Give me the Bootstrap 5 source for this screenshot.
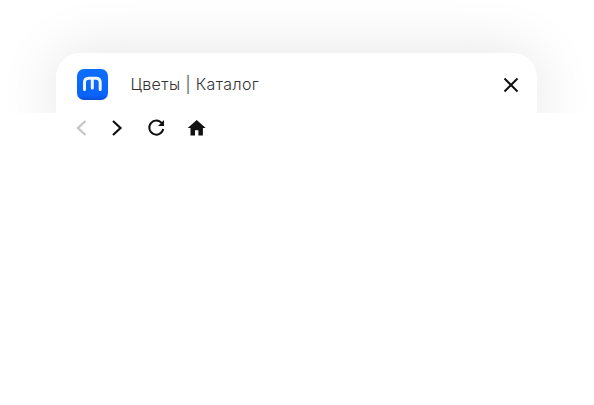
<!DOCTYPE html>
<html lang="ru">
<head>
    <meta charset="UTF-8">
    <meta name="viewport" content="width=device-width, initial-scale=1.0">
    <title>Цветы | Каталог</title>
    <link href="https://cdn.jsdelivr.net/npm/bootstrap@5.3.0/dist/css/bootstrap.min.css" rel="stylesheet">
    <style>
        body { background-color: #fff; overflow: hidden; }
        .head-clip { height: 113px; padding: 53px 57px 0 56px; overflow: hidden; }
        .head-box { height: 80px; padding: 16px 18px 0 21px; background: #fff; border-radius: 24px 24px 0 0; box-shadow: 0 0 60px rgba(0, 0, 0, 0.11); }
        .app-logo { width: 31px; height: 31px; flex: none; }
        .page-title { margin: 0 0 0 22.5px; font: 300 16px/31px Inter, "Liberation Sans", sans-serif; letter-spacing: 0.4px; color: #333; }
        .close-x { margin-left: auto; padding: 0; border: 0; background: none; line-height: 0; }
        .tool-row { padding: 5px 0 0 72px; gap: 16px; }
        .tool-btn { height: 20px; padding: 0; border: 0; background: none; line-height: 0; }
        .tool-back { width: 18px; }
        .tool-next { width: 22px; }
        .tool-wide { width: 24px; }
    </style>
</head>
<body>

<div class="head-clip">
    <div class="head-box d-flex align-items-start">
        <svg class="app-logo" viewBox="0 0 31 31">
            <defs>
                <linearGradient id="logoBg" x1="0" y1="0" x2="0" y2="1">
                    <stop offset="0" stop-color="#0d6efd"/>
                    <stop offset="0.85" stop-color="#0a64fb"/>
                    <stop offset="1" stop-color="#0a4fd6"/>
                </linearGradient>
            </defs>
            <rect width="31" height="31" rx="7" fill="url(#logoBg)"/>
            <path d="M7.5 20.5V13.5Q7.5 9.2 11.5 9.2H19Q23.2 9.2 23.2 13.5V20.5M15.3 10V19" fill="none" stroke="#f2f6ff" stroke-width="3" stroke-linecap="round"/>
        </svg>
        <h1 class="page-title">Цветы | Каталог</h1>
        <button class="close-x mt-2" type="button" aria-label="Закрыть">
            <svg width="16" height="16" viewBox="0 0 16 16"><path d="M1.5 1.5L14.5 14.5M14.5 1.5L1.5 14.5" stroke="#111" stroke-width="2" fill="none"/></svg>
        </button>
    </div>
</div>

<div class="tool-row d-flex align-items-center">
    <button class="tool-btn tool-back" type="button" aria-label="Назад">
        <svg width="14" height="20" viewBox="0 0 14 20"><path d="M11.5 3L4 10L11.5 17" stroke="#c4c4c4" stroke-width="2.2" fill="none"/></svg>
    </button>
    <button class="tool-btn tool-next" type="button" aria-label="Вперёд">
        <svg width="14" height="20" viewBox="0 0 14 20"><path d="M3 3L10.5 10L3 17" stroke="#111" stroke-width="2.2" fill="none"/></svg>
    </button>
    <button class="tool-btn tool-wide" type="button" aria-label="Обновить">
        <svg width="24" height="20" viewBox="0 0 24 20"><path d="M18 5.5A7 7 0 1 0 19.2 11" stroke="#111" stroke-width="2" fill="none"/><path d="M20 2V8H14Z" fill="#111"/></svg>
    </button>
    <button class="tool-btn tool-wide" type="button" aria-label="Домой">
        <svg width="24" height="20" viewBox="0 0 24 20"><path d="M12.7 2L3.7 10H6.5V17.5H11V12.3H14.4V17.5H18.9V10H21.7Z" fill="#111"/></svg>
    </button>
</div>

</body>
</html>
